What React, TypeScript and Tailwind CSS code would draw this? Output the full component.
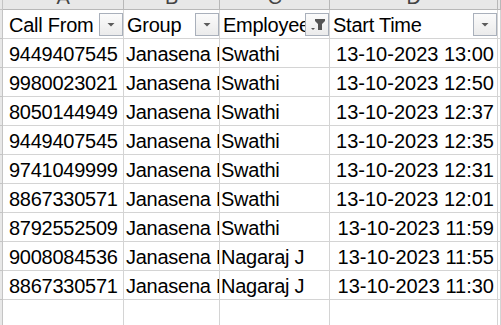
import React from "react";

type Row = { callFrom: string; group: string; employee: string; start: string };

const rows: Row[] = [
  { callFrom: "9449407545", group: "Janasena Party", employee: "Swathi", start: "13-10-2023 13:00" },
  { callFrom: "9980023021", group: "Janasena Party", employee: "Swathi", start: "13-10-2023 12:50" },
  { callFrom: "8050144949", group: "Janasena Party", employee: "Swathi", start: "13-10-2023 12:37" },
  { callFrom: "9449407545", group: "Janasena Party", employee: "Swathi", start: "13-10-2023 12:35" },
  { callFrom: "9741049999", group: "Janasena Party", employee: "Swathi", start: "13-10-2023 12:31" },
  { callFrom: "8867330571", group: "Janasena Party", employee: "Swathi", start: "13-10-2023 12:01" },
  { callFrom: "8792552509", group: "Janasena Party", employee: "Swathi", start: "13-10-2023 11:59" },
  { callFrom: "9008084536", group: "Janasena Party", employee: "Nagaraj J", start: "13-10-2023 11:55" },
  { callFrom: "8867330571", group: "Janasena Party", employee: "Nagaraj J", start: "13-10-2023 11:30" },
];

const cell = "flex items-end overflow-hidden whitespace-nowrap border-b border-r border-[#d4d4d4] pb-[3px]";
const band = "flex justify-center overflow-hidden border-b border-r border-[#b8b8b8] bg-[#e8e8e8] text-[#444]";
const edge = "border-b border-r border-[#c4c4c4] bg-[#e8e8e8]";

const FilterButton = ({ active = false }: { active?: boolean }) => (
  <div className="absolute right-0 top-[3px] h-[23px] w-[24px] border border-[#a9b0bb] bg-gradient-to-b from-[#fbfbfb] to-[#ebebeb]">
    <svg width="22" height="21" viewBox="1 1 22 21" className="block">
      {active ? (
        <>
          <polygon points="10,6 20,6 20,8 17,11 17,17 13,17 13,11 10,8" fill="#555" />
          <polygon points="6,15 10,15 8,17" fill="#555" />
        </>
      ) : (
        <polygon points="8.5,10 15.5,10 12,13.5" fill="#5b5b5b" />
      )}
    </svg>
  </div>
);

const App = () => {
  return (
    <div className="h-[325px] w-[501px] overflow-hidden bg-white font-['Liberation_Sans',Arial,sans-serif] text-[20px] leading-[20px] tracking-[-0.25px] text-black">
      <div className="grid grid-cols-[3px_121px_96px_110px_168px_1fr] grid-rows-[10px_repeat(10,29px)_26px]">
        {/* column letters */}
        <div className={edge} />
        {["A", "B", "C", "D"].map((letter) => (
          <div key={letter} className={band}>
            <span className="mt-[-13px] block">{letter}</span>
          </div>
        ))}
        <div className={band} />

        {/* header row */}
        <div className={edge} />
        <div className={`${cell} relative pl-[6px]`}>
          Call From
          <FilterButton />
        </div>
        <div className={`${cell} relative pl-[3px]`}>
          Group
          <FilterButton />
        </div>
        <div className={`${cell} relative pl-[3px]`}>
          Employee
          <FilterButton active />
        </div>
        <div className={`${cell} relative pl-[3px]`}>
          Start Time
          <FilterButton />
        </div>
        <div className={cell} />

        {rows.map((row, i) => (
          <React.Fragment key={i}>
            <div className={edge} />
            <div className={`${cell} pl-[6px]`}>{row.callFrom}</div>
            <div className={`${cell} pl-[2px]`}>{row.group}</div>
            <div className={`${cell} pl-[1px]`}>{row.employee}</div>
            <div className={`${cell} justify-end pr-[3px] tracking-normal`}>{row.start}</div>
            <div className={cell} />
          </React.Fragment>
        ))}

        {/* empty row */}
        <div className={edge} />
        <div className={cell} />
        <div className={cell} />
        <div className={cell} />
        <div className={cell} />
        <div className={cell} />
      </div>
    </div>
  );
};

export default App;
